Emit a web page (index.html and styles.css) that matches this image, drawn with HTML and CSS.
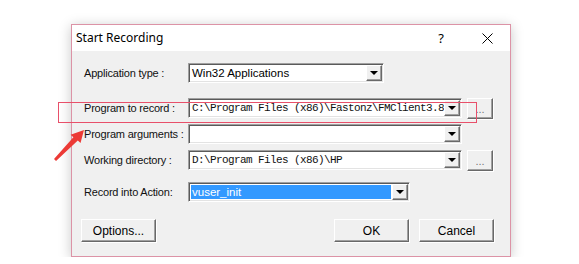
FILE: index.html
```html
<!DOCTYPE html>
<html>
  <head>
    <meta charset="utf-8">
    <title>Start Recording</title>
    <link rel="stylesheet" href="styles.css">
  </head>
  <body>
    <div class="stage">
      <div class="dialog">
        <div class="titlebar">
          <span class="title">Start Recording</span>
          <span class="help">?</span>
          <span class="close">
            <svg width="11" height="11" viewBox="0 0 11 11"><path d="M0.5 0.5 L10.5 10.5 M10.5 0.5 L0.5 10.5" stroke="#000" stroke-width="1" fill="none"/></svg>
          </span>
        </div>
        <div class="body">
          <div class="row row-first">
            <label class="lbl">Application type :</label>
            <div class="combo combo-short">
              <span class="val sans">Win32 Applications</span>
              <span class="drop"><i></i></span>
            </div>
          </div>
          <div class="row row-gap">
            <label class="lbl">Program to record :</label>
            <div class="combo combo-long">
              <span class="val mono">C:\Program Files (x86)\Fastonz\FMClient3.8</span>
              <span class="drop"><i></i></span>
            </div>
            <button type="button" class="btn browse">...</button>
          </div>
          <div class="row row-tight">
            <label class="lbl">Program arguments :</label>
            <div class="combo combo-long">
              <span class="val mono"></span>
              <span class="drop"><i></i></span>
            </div>
          </div>
          <div class="row row-tight">
            <label class="lbl">Working directory :</label>
            <div class="combo combo-long">
              <span class="val mono">D:\Program Files (x86)\HP</span>
              <span class="drop"><i></i></span>
            </div>
            <button type="button" class="btn browse">...</button>
          </div>
          <div class="row row-mid">
            <label class="lbl">Record into Action:</label>
            <div class="combo combo-mid">
              <span class="val sans selected">vuser_init</span>
              <span class="drop"><i></i></span>
            </div>
          </div>
          <div class="actions">
            <button type="button" class="btn push">Options...</button>
            <div class="spacer"></div>
            <button type="button" class="btn push">OK</button>
            <button type="button" class="btn push">Cancel</button>
          </div>
        </div>
      </div>
    </div>

    <!-- annotation drawn over the screenshot -->
    <div class="mark"></div>
    <svg class="pointer" width="44" height="40" viewBox="0 0 44 40">
      <polygon points="36,4 32.5,17 29.8,14.6 8,35 6,33 25.4,11.2 22.6,8.8" fill="#ec3a36"/>
    </svg>
  </body>
</html>
```

FILE: styles.css
```css
body {
  margin: 0;
  background: #fff;
  font-family: "Liberation Sans", Arial, sans-serif;
  font-size: 11px;
  color: #000;
}
.stage {
  padding: 24px 0 0 71px;
}
.dialog {
  width: 438px;
  border: 1px solid #dc93a6;
  background: #f0f0f0;
  box-shadow: 0 2px 12px rgba(0, 0, 0, 0.22);
}
.titlebar {
  height: 26px;
  background: #fff;
  display: flex;
  align-items: center;
  padding-left: 4px;
}
.title {
  font-family: "Noto Sans", "Open Sans", sans-serif;
  font-size: 12px;
  flex: 1;
  padding-bottom: 1px;
}
.help {
  font-family: "Noto Sans", sans-serif;
  font-size: 13px;
  width: 46px;
  text-align: center;
}
.close {
  width: 46px;
  display: flex;
  justify-content: center;
  align-items: center;
}
.body {
  padding: 12px 16px 14px 9px;
}
.row {
  display: flex;
  align-items: center;
  height: 20px;
  padding-left: 3px;
}
.row-gap {
  margin-top: 15px;
}
.row-tight {
  margin-top: 6px;
}
.row-mid {
  margin-top: 12px;
}
.lbl {
  width: 104px;
  flex: none;
  white-space: nowrap;
  color: #111;
  letter-spacing: -0.2px;
}
.combo {
  display: flex;
  height: 20px;
  box-sizing: border-box;
  border: 1px solid;
  border-color: #a0a0a0 #fff #fff #a0a0a0;
  box-shadow: inset 1px 1px 0 #5a5a5a, inset -1px -1px 0 #e3e3e3;
  background: #fff;
  padding: 2px;
}
.combo-short {
  width: 196px;
}
.combo-long {
  width: 274px;
}
.combo-mid {
  width: 222px;
}
.val {
  flex: 1;
  white-space: nowrap;
  overflow: hidden;
  line-height: 14px;
  padding-left: 1px;
}
.sans {
  font-size: 11.5px;
}
.mono {
  font-family: "Liberation Mono", "Courier New", monospace;
  font-size: 11px;
  letter-spacing: -0.6px;
  color: #111;
}
.selected {
  background: #3399ff;
  color: #fff;
  margin-right: 1px;
}
.drop {
  width: 16px;
  flex: none;
  box-sizing: border-box;
  background: #f0f0f0;
  border: 1px solid;
  border-color: #fff #696969 #696969 #fff;
  box-shadow: inset -1px -1px 0 #a0a0a0;
  display: flex;
  justify-content: center;
  align-items: center;
  margin: -1px -1px -1px 0;
}
.drop i {
  width: 0;
  height: 0;
  border-left: 4px solid transparent;
  border-right: 4px solid transparent;
  border-top: 4px solid #000;
}
.btn {
  font-family: "Liberation Sans", Arial, sans-serif;
  font-size: 12px;
  color: #000;
  background: #f0f0f0;
  border: 1px solid;
  border-color: #fff #696969 #696969 #fff;
  box-shadow: inset -1px -1px 0 #a0a0a0, 1px 1px 0 #fff;
  border-radius: 0;
  padding: 0;
}
.browse {
  width: 26px;
  height: 21px;
  margin-left: 5px;
  color: #777;
  font-size: 11px;
  line-height: 21px;
}
.actions {
  display: flex;
  margin-top: 17px;
  height: 23px;
}
.push {
  width: 75px;
  height: 23px;
}
.spacer {
  flex: 1;
}
.actions .push + .push {
  margin-left: 10px;
}
.mark {
  position: absolute;
  left: 58px;
  top: 102px;
  width: 417px;
  height: 19px;
  border: 1px solid #e8506a;
}
.pointer {
  position: absolute;
  left: 48px;
  top: 126px;
}
```
